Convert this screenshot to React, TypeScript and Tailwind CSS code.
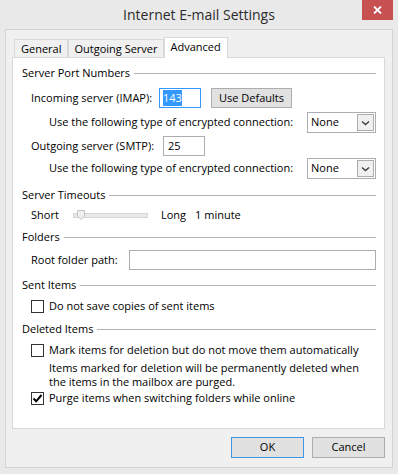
import React from "react";

const font = "font-['Open_Sans',sans-serif]";

function GroupHeader({ label, className = "" }: { label: string; className?: string }) {
  return (
    <div className={`flex h-[16px] items-center gap-[4px] pl-[9px] ${className}`}>
      <span className="whitespace-nowrap">{label}</span>
      <div className="h-px flex-1 bg-[#b4b4b4]" />
    </div>
  );
}

function Select() {
  return (
    <div className="flex h-[21px] w-[69px] items-center justify-between border border-[#abadb3] bg-white pl-[3px] pr-[1px]">
      <span>None</span>
      <div className="flex h-[17px] w-[17px] items-center justify-center border border-[#acacac] bg-[#f0f0f0]">
        <svg width="9" height="6" viewBox="0 0 9 6">
          <path d="M1 1.5 L4.5 4.5 L8 1.5" fill="none" stroke="#404040" strokeWidth="1.4" />
        </svg>
      </div>
    </div>
  );
}

function Checkbox({ checked = false }: { checked?: boolean }) {
  return (
    <div className="flex h-[13px] w-[13px] items-center justify-center border border-[#333333] bg-white">
      {checked && (
        <svg width="11" height="11" viewBox="0 0 11 11">
          <path d="M1.5 5.5 L4.2 8.3 L9.5 2" fill="none" stroke="#000" strokeWidth="2" />
        </svg>
      )}
    </div>
  );
}

function Tab({ label, active = false, pad = "px-[6px]" }: { label: string; active?: boolean; pad?: string }) {
  return active ? (
    <div className={`relative z-10 -mb-px flex h-[21px] items-start border border-b-0 border-[#d9d9d9] bg-white pt-[1px] ${pad}`}>
      {label}
    </div>
  ) : (
    <div className={`flex h-[18px] items-center border border-b-0 border-[#d9d9d9] bg-[#f0f0f0] pt-[1px] ${pad}`}>
      {label}
    </div>
  );
}

export default function App() {
  return (
    <div className={`${font} h-[474px] w-[398px] overflow-hidden bg-[#e9e9e9] text-[11px] text-black`}>
      {/* title bar */}
      <div className="relative flex h-[29px] items-center justify-center">
        <span className="text-[14px] text-[#2b2b2b]">Internet E-mail Settings</span>
        <div className="absolute right-[5px] top-0 flex h-[20px] w-[31px] items-center justify-center bg-[#c75050]">
          <svg width="9" height="8" viewBox="0 0 9 8">
            <path d="M1 0.5 L8 7.5 M8 0.5 L1 7.5" stroke="#fff" strokeWidth="1.8" />
          </svg>
        </div>
      </div>

      {/* client area */}
      <div className="mx-[5px] flex h-[439px] flex-col border border-[#d4d4d4] bg-[#f0f0f0] pl-[6px] pr-[7px] pt-[7px]">
        <div className="flex h-[20px] items-end pl-[2px]">
          <Tab label="General" />
          <Tab label="Outgoing Server" pad="px-[5px]" />
          <Tab label="Advanced" active pad="px-[6px]" />
        </div>

        <div className="flex h-[372px] flex-col border border-[#d9d9d9] bg-white pr-[8px]">
          <GroupHeader label="Server Port Numbers" className="mt-[7px]" />

          <div className="mt-[7px] flex h-[20px] items-center pl-[18px]">
            <span className="w-[128px]">Incoming server (IMAP):</span>
            <div className="flex h-[20px] w-[42px] items-center border border-[#3399ff] bg-white pl-[3px]">
              <span className="bg-[#3399ff] text-white">143</span>
            </div>
            <div className="ml-[10px] flex h-[20px] w-[81px] items-center justify-center border border-[#adadad] bg-[#e1e1e1]">
              Use Defaults
            </div>
          </div>

          <div className="mt-[4px] flex h-[21px] items-center pl-[36px]">
            <span className="flex-1">Use the following type of encrypted connection:</span>
            <Select />
          </div>

          <div className="mt-[3px] flex h-[20px] items-center pl-[18px]">
            <span className="w-[132px]">Outgoing server (SMTP):</span>
            <div className="flex h-[20px] w-[42px] items-center border border-[#abadb3] bg-white pl-[4px]">25</div>
          </div>

          <div className="mt-[2px] flex h-[21px] items-center pl-[36px]">
            <span className="flex-1">Use the following type of encrypted connection:</span>
            <Select />
          </div>

          <GroupHeader label="Server Timeouts" className="mt-[8px]" />

          <div className="mt-[4px] flex h-[16px] items-center pl-[18px]">
            <span className="w-[42px]">Short</span>
            <div className="flex h-[10px] w-[75px] items-center">
              <div className="flex h-[5px] w-full items-center border border-[#d6d6d6] bg-[#e7eaea] pl-[3px]">
                <svg width="8" height="10" viewBox="0 0 8 10" className="-mt-[1px]">
                  <path d="M0.5 0.5 H7.5 V6 L4 9.5 L0.5 6 Z" fill="#f0f0f0" stroke="#c4c4c4" />
                </svg>
              </div>
            </div>
            <span className="ml-[13px]">Long</span>
            <span className="ml-[9px]">1 minute</span>
          </div>

          <GroupHeader label="Folders" className="mt-[6px]" />

          <div className="mt-[5px] flex h-[20px] items-center pl-[18px]">
            <span className="w-[98px]">Root folder path:</span>
            <div className="h-[20px] flex-1 border border-[#abadb3] bg-white" />
          </div>

          <GroupHeader label="Sent Items" className="mt-[7px]" />

          <div className="mt-[5px] flex h-[16px] items-center gap-[5px] pl-[18px]">
            <Checkbox />
            <span>Do not save copies of sent items</span>
          </div>

          <GroupHeader label="Deleted Items" className="mt-[7px]" />

          <div className="mt-[5px] flex h-[16px] items-center gap-[5px] pl-[18px]">
            <Checkbox />
            <span>Mark items for deletion but do not move them automatically</span>
          </div>

          <div className="mt-[3px] flex flex-col pl-[36px]">
            <div className="h-[14px] leading-[14px]">Items marked for deletion will be permanently deleted when</div>
            <div className="h-[14px] leading-[14px]">the items in the mailbox are purged.</div>
          </div>

          <div className="mt-[1px] flex h-[16px] items-center gap-[5px] pl-[18px]">
            <Checkbox checked />
            <span>Purge items when switching folders while online</span>
          </div>
        </div>

        <div className="mt-[8px] flex justify-end gap-[8px]">
          <div className="flex h-[21px] w-[73px] items-center justify-center border border-[#3c96e2] bg-[#e1e1e1]">
            OK
          </div>
          <div className="flex h-[21px] w-[73px] items-center justify-center border border-[#adadad] bg-[#e1e1e1]">
            Cancel
          </div>
        </div>
      </div>
    </div>
  );
}
